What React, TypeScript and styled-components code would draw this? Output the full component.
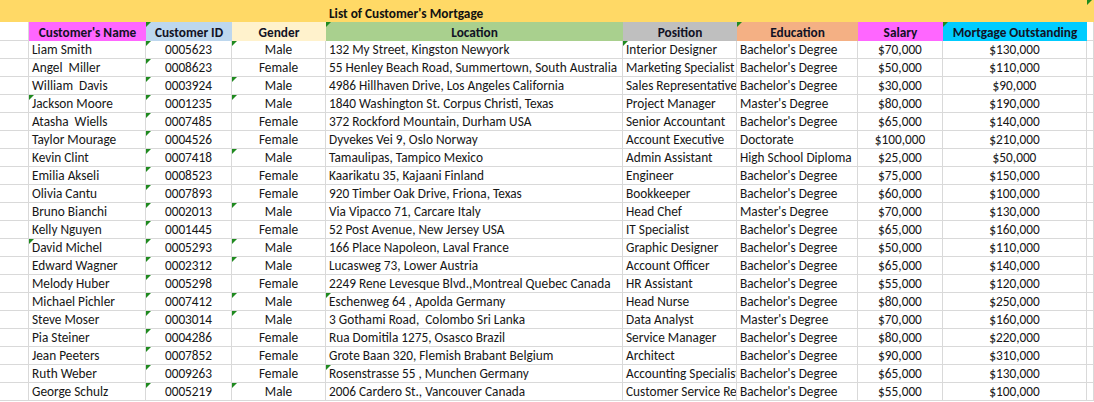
import React from "react";
import styled, { createGlobalStyle, css } from "styled-components";

const Global = createGlobalStyle`
  html, body { margin: 0; padding: 0; background: #ffffff; }
  body { font-family: Calibri, Carlito, Lato, "Liberation Sans", sans-serif; }
`;

const COLS = "29px 117px 86px 94px 297px 114px 121px 85px 144px 1fr";
const GRID = "#d9d9d9";

type Align = "left" | "center";

const Sheet = styled.div`
  width: 1094px;
  height: 402px;
  overflow: hidden;
  background: #fff;
  color: #161616;
  font-size: 13.3px;
`;

const TitleRow = styled.div`
  display: grid;
  grid-template-columns: ${COLS};
  height: 22px;
  background: #ffd966;
`;

const TitleText = styled.div`
  grid-column: 5 / 10;
  font-weight: 700;
  padding: 5px 0 0 3px;
  line-height: 17px;
  white-space: nowrap;
  color: #111;
`;

const TitleCorner = styled.div`
  grid-column: 10;
  position: relative;
`;

const Row = styled.div<{ $head?: boolean }>`
  display: grid;
  grid-template-columns: ${COLS};
  height: ${(p) => (p.$head ? "19px" : "18px")};
`;

const marker = css`
  &::before {
    content: "";
    position: absolute;
    left: 0;
    top: 0;
    border-top: 5px solid #1f8a1f;
    border-right: 5px solid transparent;
  }
`;

const Cell = styled.div<{ $align?: Align; $mark?: boolean }>`
  position: relative;
  box-sizing: border-box;
  border-right: 1px solid ${GRID};
  border-bottom: 1px solid ${GRID};
  padding: 0 3px;
  line-height: 17px;
  white-space: pre;
  overflow: hidden;
  text-align: ${(p) => p.$align ?? "left"};
  ${(p) => p.$mark && marker}
`;

const HeadCell = styled.div<{ $bg: string; $mark?: boolean }>`
  position: relative;
  box-sizing: border-box;
  background: ${(p) => p.$bg};
  font-weight: 700;
  text-align: center;
  line-height: 21px;
  white-space: nowrap;
  overflow: hidden;
  color: #121225;
  ${(p) => p.$mark && marker}
`;

const BlankHead = styled.div`
  box-sizing: border-box;
  border-right: 1px solid ${GRID};
  border-bottom: 1px solid ${GRID};
`;

const TopMark = styled.span`
  position: absolute;
  left: 0;
  top: 0;
  border-top: 5px solid #1f8a1f;
  border-right: 5px solid transparent;
`;

type Rec = [string, string, string, string, string, string, string, string];

const data: Rec[] = [
  ["Liam Smith", "0005623", "Male", "132 My Street, Kingston Newyork", "Interior Designer", "Bachelor's Degree", "$70,000", "$130,000"],
  ["Angel  Miller", "0008623", "Female", "55 Henley Beach Road, Summertown, South Australia", "Marketing Specialist", "Bachelor's Degree", "$50,000", "$110,000"],
  ["William  Davis", "0003924", "Male", "4986 Hillhaven Drive, Los Angeles California", "Sales Representative", "Bachelor's Degree", "$30,000", "$90,000"],
  ["Jackson Moore", "0001235", "Male", "1840 Washington St. Corpus Christi, Texas", "Project Manager", "Master's Degree", "$80,000", "$190,000"],
  ["Atasha  Wiells", "0007485", "Female", "372 Rockford Mountain, Durham USA", "Senior Accountant", "Bachelor's Degree", "$65,000", "$140,000"],
  ["Taylor Mourage", "0004526", "Female", "Dyvekes Vei 9, Oslo Norway", "Account Executive", "Doctorate", "$100,000", "$210,000"],
  ["Kevin Clint", "0007418", "Male", "Tamaulipas, Tampico Mexico", "Admin Assistant", "High School Diploma", "$25,000", "$50,000"],
  ["Emilia Akseli", "0008523", "Female", "Kaarikatu 35, Kajaani Finland", "Engineer", "Bachelor's Degree", "$75,000", "$150,000"],
  ["Olivia Cantu", "0007893", "Female", "920 Timber Oak Drive, Friona, Texas", "Bookkeeper", "Bachelor's Degree", "$60,000", "$100,000"],
  ["Bruno Bianchi", "0002013", "Male", "Via Vipacco 71, Carcare Italy", "Head Chef", "Master's Degree", "$70,000", "$130,000"],
  ["Kelly Nguyen", "0001445", "Female", "52 Post Avenue, New Jersey USA", "IT Specialist", "Bachelor's Degree", "$65,000", "$160,000"],
  ["David Michel", "0005293", "Male", "166 Place Napoleon, Laval France", "Graphic Designer", "Bachelor's Degree", "$50,000", "$110,000"],
  ["Edward Wagner", "0002312", "Male", "Lucasweg 73, Lower Austria", "Account Officer", "Bachelor's Degree", "$65,000", "$140,000"],
  ["Melody Huber", "0005298", "Female", "2249 Rene Levesque Blvd.,Montreal Quebec Canada", "HR Assistant", "Bachelor's Degree", "$55,000", "$120,000"],
  ["Michael Pichler", "0007412", "Male", "Eschenweg 64 , Apolda Germany", "Head Nurse", "Bachelor's Degree", "$80,000", "$250,000"],
  ["Steve Moser", "0003014", "Male", "3 Gothami Road,  Colombo Sri Lanka", "Data Analyst", "Master's Degree", "$70,000", "$160,000"],
  ["Pia Steiner", "0004286", "Female", "Rua Domitila 1275, Osasco Brazil", "Service Manager", "Bachelor's Degree", "$80,000", "$220,000"],
  ["Jean Peeters", "0007852", "Female", "Grote Baan 320, Flemish Brabant Belgium", "Architect", "Bachelor's Degree", "$90,000", "$310,000"],
  ["Ruth Weber", "0009263", "Female", "Rosenstrasse 55 , Munchen Germany", "Accounting Specialist", "Bachelor's Degree", "$65,000", "$130,000"],
  ["George Schulz", "0005219", "Male", "2006 Cardero St., Vancouver Canada", "Customer Service Representative", "Bachelor's Degree", "$55,000", "$100,000"],
];

const headers: { label: string; bg: string; mark?: boolean }[] = [
  { label: "Customer's Name", bg: "#ff66ff" },
  { label: "Customer ID", bg: "#bdd7ee", mark: true },
  { label: "Gender", bg: "#fff2cc" },
  { label: "Location", bg: "#a9d08e", mark: true },
  { label: "Position", bg: "#bfbfbf" },
  { label: "Education", bg: "#f4b084", mark: true },
  { label: "Salary", bg: "#ff66ff" },
  { label: "Mortgage Outstanding", bg: "#00ccff", mark: true },
];

const nameMarks = new Set([3, 11]);
const locMarks = new Set([14, 18]);

export default function App() {
  return (
    <>
      <Global />
      <Sheet>
        <TitleRow>
          <TitleText>List of Customer's Mortgage</TitleText>
          <TitleCorner>
            <TopMark />
          </TitleCorner>
        </TitleRow>
        <Row $head>
          <BlankHead />
          {headers.map((h) => (
            <HeadCell key={h.label} $bg={h.bg} $mark={h.mark}>
              {h.label}
            </HeadCell>
          ))}
          <BlankHead />
        </Row>
        {data.map((r, i) => (
          <Row key={r[1]}>
            <Cell />
            <Cell $mark={nameMarks.has(i)}>{r[0]}</Cell>
            <Cell $align="center" $mark>{r[1]}</Cell>
            <Cell $align="center" $mark={r[2] === "Male"}>{r[2]}</Cell>
            <Cell $mark={locMarks.has(i)}>{r[3]}</Cell>
            <Cell $mark={i === 0}>{r[4]}</Cell>
            <Cell>{r[5]}</Cell>
            <Cell $align="center">{r[6]}</Cell>
            <Cell $align="center">{r[7]}</Cell>
            <Cell />
          </Row>
        ))}
      </Sheet>
    </>
  );
}
